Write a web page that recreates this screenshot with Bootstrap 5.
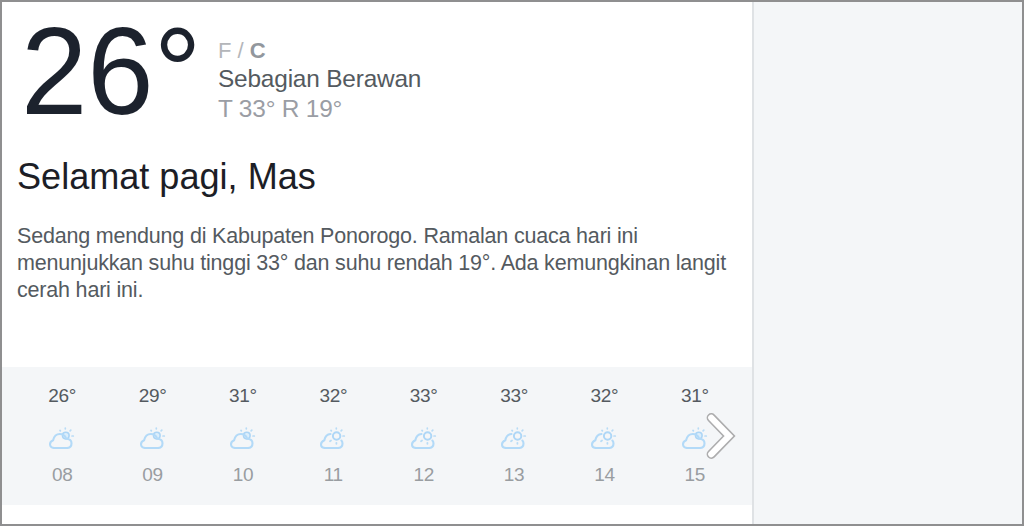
<!DOCTYPE html>
<html lang="id">

<head>
    <meta charset="UTF-8">
    <meta name="viewport" content="width=device-width, initial-scale=1.0">
    <title>Cuaca</title>
    <link href="https://cdn.jsdelivr.net/npm/bootstrap@5.3.0/dist/css/bootstrap.min.css" rel="stylesheet">
    <style>
        body {
            font-family: "Liberation Sans", Arial, sans-serif;
            background-color: #f4f6f8;
            color: #545a60;
        }

        .frame {
            height: 526px;
            border: 2px solid #8f8f90;
        }

        .weather {
            width: 752px;
            border-right: 2px solid #dfe2e5;
        }

        .summary {
            height: 118px;
            padding-left: 19px;
        }

        .temp-now {
            width: 197px;
            font-size: 124px;
            line-height: 139px;
            color: #1c222d;
            transform: scaleX(0.962);
            transform-origin: left;
        }

        .details {
            padding-top: 35px;
            font-size: 24.4px;
            line-height: 30px;
            letter-spacing: -0.18px;
        }

        .unit {
            font-size: 22px;
            line-height: 27px;
            color: #b4b6ba;
            letter-spacing: 0;
        }

        .unit b {
            color: #92979d;
        }

        .range {
            color: #9a9da4;
        }

        .greeting {
            margin: 36px 0 0 15px;
            font-size: 36.1px;
            line-height: 42px;
            color: #1c1e26;
        }

        .forecast-text {
            margin: 25px 0 0 15px;
            font-size: 21.5px;
            line-height: 27px;
            letter-spacing: -0.19px;
        }

        .hourly {
            height: 138px;
            margin-top: 63px;
            padding: 0 12px 0 15px;
            background-color: #f4f6f8;
            font-size: 19px;
            letter-spacing: -0.35px;
        }

        .hour-temp {
            margin-top: 16px;
            line-height: 26px;
        }

        .sky {
            width: 28px;
            height: 22px;
            margin: 18px 0 14px;
        }

        .hour-time {
            line-height: 24px;
            color: #999da1;
        }

        .next-btn {
            top: 44px;
            right: 16px;
            line-height: 0;
        }
    </style>
</head>

<body>
    <!-- Simbol cuaca -->
    <svg class="d-none">
        <defs>
            <g id="rays" fill="none" stroke="#b9dcf6" stroke-width="1.7" stroke-linecap="round">
                <path d="M12 3.4l.4.5M17.3 1v.8M22.8 3.2l-.7.7M25.3 9h-1.3" />
            </g>
            <symbol id="cloudy" viewBox="0 0 28 22">
                <use href="#rays" />
                <circle cx="17.8" cy="8.6" r="3.3" fill="#dceefb" stroke="#acd5f6" stroke-width="1.6" />
                <path d="M6.4 21C3.7 21 2 19.6 2 17.3c0-1.7 1-3.1 3.1-4C6 9.5 8.5 7 11.8 7c3.2 0 5.4 1.7 6.4 4.8 3.5.1 5.3 2 5.3 4.5 0 2.8-1.9 4.7-4.8 4.7z" fill="none" stroke="#b3daf8" stroke-width="2.1" stroke-linejoin="round" />
            </symbol>
            <symbol id="sunny" viewBox="0 0 28 22">
                <use href="#rays" />
                <path d="M11.5 7C8.2 7.2 6 9.7 5.3 13.3 3 14.3 2 15.6 2 17.5 2 19.7 3.7 21 6.4 21h12.3c2.9 0 4.8-1.7 4.8-4.4 0-1.4-.4-2.4-1.1-3.1" fill="none" stroke="#b3daf8" stroke-width="2.1" stroke-linecap="round" />
                <circle cx="17.6" cy="9" r="3.7" fill="none" stroke="#aed7f7" stroke-width="2" />
                <path d="M11 14.2l1-.7M17.4 15.8v1" fill="none" stroke="#b9dcf6" stroke-width="1.8" stroke-linecap="round" />
            </symbol>
        </defs>
    </svg>

    <div class="frame d-flex overflow-hidden">
        <main class="weather bg-white flex-shrink-0">
            <!-- Suhu sekarang -->
            <div class="summary d-flex">
                <div class="temp-now flex-shrink-0">26°</div>
                <div class="details text-nowrap">
                    <div class="unit">F / <b>C</b></div>
                    <div>Sebagian Berawan</div>
                    <div class="range">T 33° R 19°</div>
                </div>
            </div>

            <h1 class="greeting fw-normal">Selamat pagi, Mas</h1>
            <p class="forecast-text text-nowrap">Sedang mendung di Kabupaten Ponorogo. Ramalan cuaca hari ini<br>
                menunjukkan suhu tinggi 33° dan suhu rendah 19°. Ada kemungkinan langit<br>
                cerah hari ini.</p>

            <!-- Ramalan per jam -->
            <div class="hourly position-relative">
                <div class="d-flex text-center" id="daftarJam"></div>
                <a class="next-btn position-absolute" role="button">
                    <svg width="32" height="50" viewBox="0 0 32 50" fill="none" stroke-linecap="round">
                        <path d="M7.3 6.8L25 25 7.3 43.2" stroke="#adadae" stroke-width="9.4" />
                        <path d="M7.3 6.8L25 25 7.3 43.2" stroke="#fff" stroke-width="6.2" />
                    </svg>
                </a>
            </div>
        </main>
    </div>

    <script src="https://cdn.jsdelivr.net/npm/bootstrap@5.3.0/dist/js/bootstrap.bundle.min.js"></script>
    <script>
        const ramalan = [
            { jam: "08", suhu: 26, ikon: "cloudy" },
            { jam: "09", suhu: 29, ikon: "cloudy" },
            { jam: "10", suhu: 31, ikon: "cloudy" },
            { jam: "11", suhu: 32, ikon: "sunny" },
            { jam: "12", suhu: 33, ikon: "sunny" },
            { jam: "13", suhu: 33, ikon: "sunny" },
            { jam: "14", suhu: 32, ikon: "sunny" },
            { jam: "15", suhu: 31, ikon: "cloudy" },
        ];

        // Tampilkan kolom setiap jam
        document.getElementById("daftarJam").innerHTML = ramalan.map((item) => `
            <div class="flex-fill d-flex flex-column align-items-center">
                <div class="hour-temp">${item.suhu}°</div>
                <svg class="sky"><use href="#${item.ikon}"/></svg>
                <div class="hour-time">${item.jam}</div>
            </div>`).join("");
    </script>
</body>

</html>
